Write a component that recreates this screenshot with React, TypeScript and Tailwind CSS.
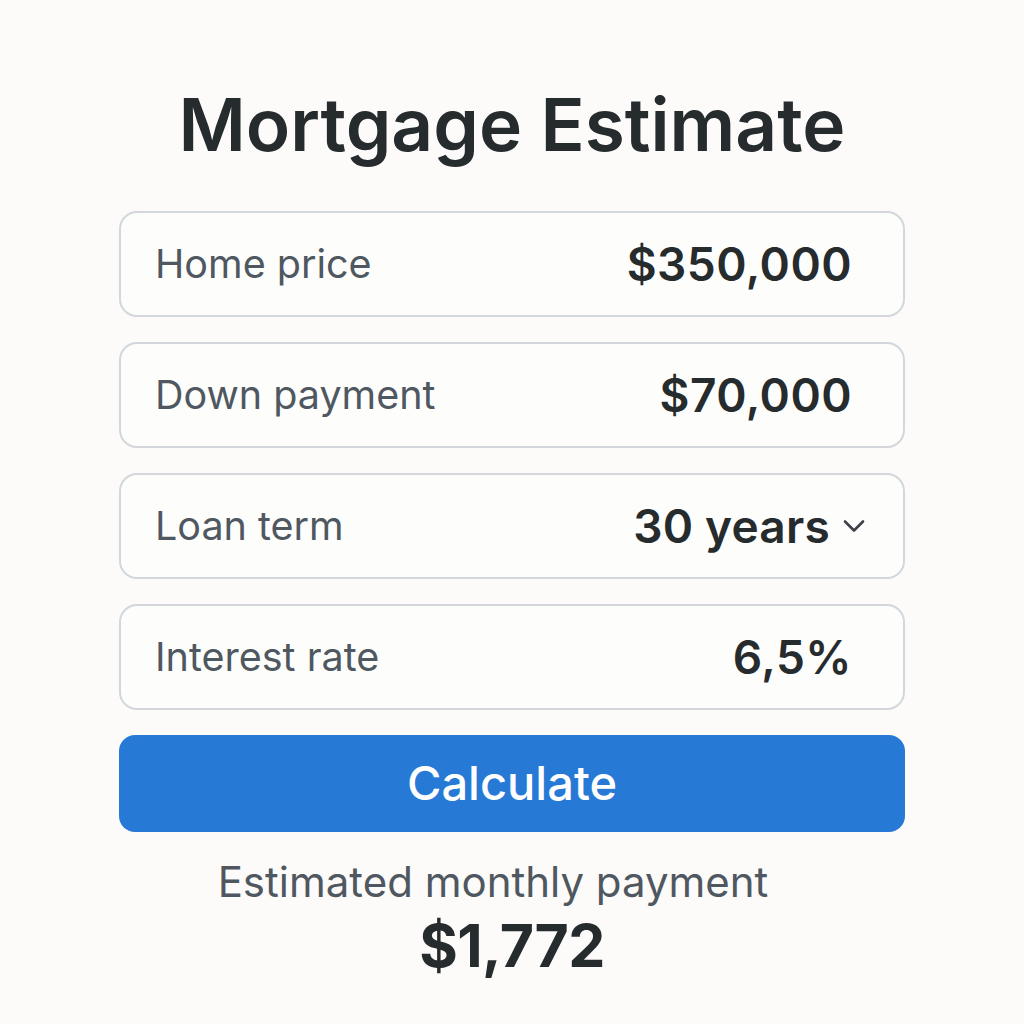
const rows = [
  { label: 'Home price', value: '$350,000' },
  { label: 'Down payment', value: '$70,000' },
  { label: 'Loan term', value: '30 years', select: true },
  { label: 'Interest rate', value: '6,5%' },
]

function Chevron() {
  return (
    <svg width="24" height="16" viewBox="0 0 24 16" fill="none" className="text-[#3c4247]">
      <path d="M3 3.5l9 9 9-9" stroke="currentColor" strokeWidth="2.6" strokeLinecap="round" strokeLinejoin="round" />
    </svg>
  )
}

export default function App() {
  return (
    <div className="min-h-screen w-full bg-[#fcfbfa] text-[#262b2d]" style={{ fontFamily: 'Inter, "Noto Sans", sans-serif' }}>
      <div className="mx-auto w-[786px] pt-[88px]">
        <h1 className="text-center text-[73px] font-semibold leading-none">Mortgage Estimate</h1>

        <div className="mt-[50px] flex flex-col gap-[25px]">
          {rows.map((r) => (
            <div key={r.label}
              className="flex h-[106px] items-center justify-between rounded-[18px] border-2 border-[#d3d7db] bg-[#fdfdfc] pl-[34px] pr-[51px]">
              <span className="pt-[2px] text-[39.5px] font-normal text-[#4f5860]">{r.label}</span>
              {r.select ? (
                <span className="-mr-[14px] flex items-center gap-[12px]">
                  <span className="text-[46px] font-semibold tracking-[0.005em]">{r.value}</span>
                  <Chevron />
                </span>
              ) : (
                <span className="text-[46px] font-semibold tracking-[0.01em]">{r.value}</span>
              )}
            </div>
          ))}
        </div>

        <button className="mt-[25px] flex h-[97px] w-full items-center justify-center rounded-[16px] bg-[#2779d6] text-[47px] font-medium text-white">
          Calculate
        </button>

        <div className="mt-[24px] flex flex-col items-center">
          <div className="-ml-[38px] text-[42px] font-normal leading-tight text-[#4f5860]">Estimated monthly payment</div>
          <div className="text-[59px] font-bold leading-tight tracking-[-0.01em]">$1,772</div>
        </div>
      </div>
    </div>
  )
}
